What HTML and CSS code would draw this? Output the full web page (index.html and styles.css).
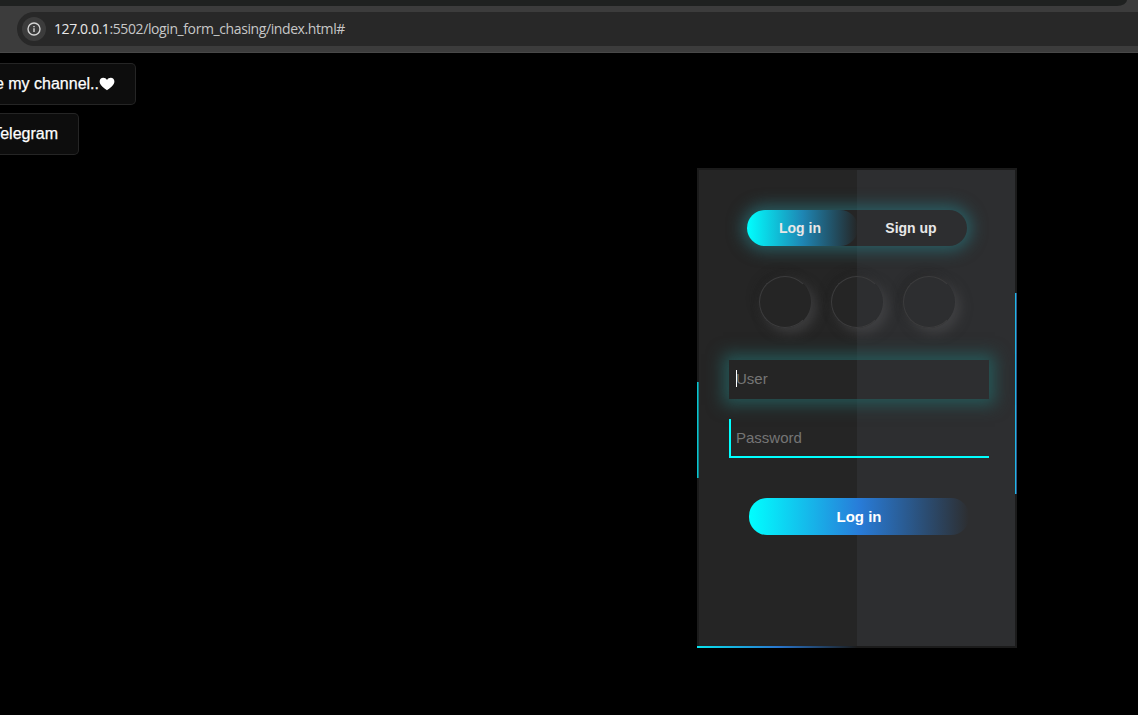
FILE: index.html
```html
<!DOCTYPE html>
<html lang="en">
<head>
<meta charset="utf-8">
<title>Login form</title>
<link rel="stylesheet" href="styles.css">
</head>
<body>
<header class="browser">
  <div class="tabstrip"></div>
  <div class="address">
    <span class="info"><svg width="14" height="14" viewBox="0 0 14 14"><circle cx="7" cy="7" r="6" fill="none" stroke="#d5d5d5" stroke-width="1.4"/><path d="M7 6.3V10M7 3.9V5.2" stroke="#d5d5d5" stroke-width="1.4"/></svg></span>
    <span class="url"><span class="host">127.0.0.1</span>:5502/login_form_chasing/index.html#</span>
  </div>
</header>
<main class="page">
  <nav class="links">
    <a class="link link-channel"><span>e my channel..</span><svg class="heart" width="16" height="14" viewBox="0 0 16 14"><path d="M8 13.2C5.8 11.8.6 8.4.6 4.5.6 2.300 2.200.7 4.200.7 5.900.7 7.200 1.600 8 3 8.800 1.600 10.100.7 11.800.7c2 0 3.600 1.600 3.600 3.800C15.400 8.400 10.200 11.800 8 13.200z" fill="#fff"/></svg></a>
    <a class="link link-telegram"><span>Telegram</span></a>
  </nav>
  <form class="card">
    <i class="edge edge-left"></i><i class="edge edge-right"></i><i class="edge edge-bottom"></i>
    <div class="toggle"><span class="tab tab-active">Log in</span><span class="tab">Sign up</span></div>
    <div class="socials"><span class="social"></span><span class="social"></span><span class="social"></span></div>
    <div class="field field-focus"><i class="caret"></i>User</div>
    <div class="field field-lined">Password</div>
    <div class="submit">Log in</div>
  </form>
</main>
</body>
</html>
```
FILE: styles.css
```css
* { box-sizing: border-box; }
body { margin: 0; height: 715px; overflow: hidden; background: #000; font-family: "Liberation Sans", Arial, sans-serif; }
.browser { height: 53px; background: #3c3c3c; border-bottom: 1px solid #484848; }
.tabstrip { width: 1127px; height: 6px; background: #1f2120; border-bottom-right-radius: 10px 6px; }
.address { height: 34px; margin: 6px 0 0 17px; padding-left: 5px; display: flex; align-items: center; background: #282828; border-radius: 17px 0 0 17px; }
.info { width: 24px; height: 24px; margin-right: 8px; display: flex; align-items: center; justify-content: center; border-radius: 50%; background: #3c3c3c; }
.url { font: 14px/20px "Open Sans", "Noto Sans", sans-serif; letter-spacing: -0.4px; color: #c7c7c7; white-space: nowrap; }
.host { color: #e8e8e8; }
.page { height: 662px; display: flex; align-items: flex-start; justify-content: space-between; padding-right: 121px; }
.links { display: flex; flex-direction: column; gap: 8px; padding-top: 10px; }
.link { height: 42px; padding-right: 20px; display: flex; align-items: center; justify-content: flex-end; overflow: hidden; white-space: nowrap; background: #0d0d0d; border: 1px solid #252525; border-left: 0; border-radius: 0 5px 5px 0; color: #fff; font-size: 16px; -webkit-text-stroke: 0.25px #fff; }
.link-channel { width: 136px; }
.link-telegram { width: 79px; }
.heart { flex: none; }
.card { position: relative; width: 320px; height: 480px; margin-top: 115px; padding-top: 40px; display: flex; flex-direction: column; align-items: center; border: 2px solid #1b1b1b; background: linear-gradient(90deg, #252525 50%, #2d2e30 50%); }
.edge { position: absolute; }
.edge-left { left: -2px; top: 212px; width: 2px; height: 96px; background: linear-gradient(90deg, #08c5d0 50%, #128188 50%); }
.edge-right { right: -2px; top: 123px; width: 2px; height: 201px; background: linear-gradient(90deg, #1cb8e4 50%, #31578a 50%); }
.edge-bottom { left: -2px; bottom: -2px; width: 160px; height: 2px; background: linear-gradient(90deg, #08e5f0, #2978d0 50%, transparent); }
.toggle { width: 220px; height: 36px; display: flex; border-radius: 18px; box-shadow: 0 0 15px 5px rgba(40, 112, 120, .7); }
.tab { flex: 1; display: flex; align-items: center; justify-content: center; font-size: 14px; font-weight: bold; color: #e8e8e8; padding-right: 5px; }
.tab + .tab { padding: 0 3px 0 0; }
.tab-active { border-radius: 18px; background: linear-gradient(90deg, #00ffff, #1e86b4 50%, rgba(30, 134, 180, 0)); }
.socials { display: flex; gap: 20px; margin-top: 30px; }
.social { width: 52px; height: 52px; border: 1px solid #3c3c3d; border-right-color: transparent; border-radius: 50%; box-shadow: 5px 5px 12px rgba(85, 85, 88, .5), -4px -4px 10px rgba(30, 31, 31, .3); }
.field { position: relative; width: 260px; height: 39px; margin-left: 4px; display: flex; align-items: center; padding: 0 0 2px 7px; font-size: 15px; color: #757575; }
.field-focus { margin-top: 32px; box-shadow: 0 0 15px 6px rgba(36, 96, 96, .8); }
.caret { position: absolute; left: 7px; top: 10px; width: 1px; height: 17px; background: #fff; }
.field-lined { margin-top: 20px; padding-left: 5px; padding-bottom: 0; border-left: 2px solid #0ff; border-bottom: 2px solid #0ff; }
.submit { width: 220px; height: 37px; margin: 40px 0 0 4px; display: flex; align-items: center; justify-content: center; border-radius: 18px; background: linear-gradient(90deg, #0ff, #287cd9 50%, rgba(40, 124, 217, 0)); color: #fff; font-size: 15px; font-weight: bold; }
```
